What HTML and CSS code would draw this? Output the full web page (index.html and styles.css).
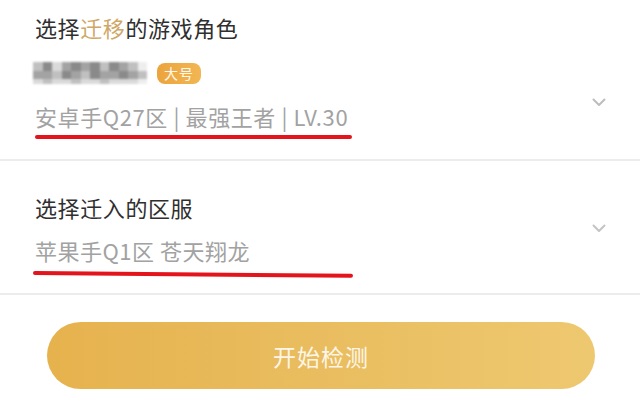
FILE: index.html
```html
<!DOCTYPE html>
<html lang="zh-CN">
<head>
<meta charset="utf-8">
<title>角色迁移</title>
<link rel="stylesheet" href="styles.css">
</head>
<body>
<main class="page">
  <section class="field field-role">
    <h2 class="field-title">选择<span class="accent">迁移</span>的游戏角色</h2>
    <div class="picker">
      <div class="picker-body">
        <div class="role-name">
          <div class="mosaic" aria-hidden="true">
            <i class="m3"></i><i class="m1"></i><i class="m4"></i><i class="m2"></i><i class="m1"></i><i class="m2"></i><i class="m1"></i><i class="m3"></i><i class="m1"></i><i class="m2"></i><i class="m3"></i><i class="m5"></i>
            <i class="m2"></i><i class="m2"></i><i class="m3"></i><i class="m1"></i><i class="m2"></i><i class="m3"></i><i class="m1"></i><i class="m2"></i><i class="m2"></i><i class="m1"></i><i class="m2"></i><i class="m3"></i>
            <i class="m4"></i><i class="m3"></i><i class="m4"></i><i class="m4"></i><i class="m3"></i><i class="m4"></i><i class="m4"></i><i class="m3"></i><i class="m4"></i><i class="m4"></i><i class="m4"></i><i class="m5"></i>
          </div>
          <span class="badge">大号</span>
        </div>
        <p class="value">安卓手Q27区 | 最强王者 | LV.30</p>
        <div class="mark mark-a"></div>
      </div>
      <svg class="chevron chevron-a" width="14" height="9" viewBox="0 0 14 9"><path d="M1.5 1.5 L7 7 L12.5 1.5" fill="none" stroke="#bdbdbd" stroke-width="2" stroke-linecap="round" stroke-linejoin="round"/></svg>
    </div>
  </section>

  <section class="field field-server">
    <div class="picker">
      <div class="picker-body">
        <h2 class="field-title">选择迁入的区服</h2>
        <p class="value value-server">苹果手Q1区 苍天翔龙</p>
        <div class="mark mark-b"></div>
      </div>
      <svg class="chevron chevron-b" width="14" height="9" viewBox="0 0 14 9"><path d="M1.5 1.5 L7 7 L12.5 1.5" fill="none" stroke="#c4c4c4" stroke-width="2" stroke-linecap="round" stroke-linejoin="round"/></svg>
    </div>
  </section>

  <div class="actions">
    <button class="start" type="button">开始检测</button>
  </div>
</main>
</body>
</html>
```

FILE: styles.css
```css
* {
  box-sizing: border-box;
}

html, body {
  margin: 0;
  padding: 0;
  background: #ffffff;
}

body {
  font-family: "Noto Sans CJK SC", "Noto Sans", sans-serif;
  color: #333333;
  width: 640px;
  height: 417px;
  overflow: hidden;
}

.field {
  padding-left: 35px;
  padding-right: 34px;
  border-bottom: 2px solid #ececec;
}

.field-role {
  padding-top: 12px;
  padding-bottom: 20px;
}

.field-server {
  padding-top: 31px;
  padding-bottom: 18px;
}

.field-title {
  margin: 0;
  font-size: 22px;
  font-weight: 400;
  line-height: 30px;
  color: #2f2f2f;
  letter-spacing: 0.6px;
}

.accent {
  color: #cfa766;
}

.picker {
  display: flex;
  align-items: center;
  justify-content: space-between;
}

.picker-body {
  display: flex;
  flex-direction: column;
  align-items: flex-start;
}

.role-name {
  display: flex;
  align-items: center;
  gap: 10px;
  margin-top: 20px;
  height: 22px;
}

/* pixelated nickname */
.mosaic {
  display: grid;
  grid-template-columns: repeat(12, 9.5px);
  grid-template-rows: 9px 8px 5px;
  width: 114px;
  margin-left: -2px;
  filter: blur(0.8px);
}

.mosaic i {
  display: block;
}

.m1 { background: #8a8a8a; }
.m2 { background: #a3a3a3; }
.m3 { background: #c0c0c0; }
.m4 { background: #dadada; }
.m5 { background: #eeeeee; }

.badge {
  display: inline-flex;
  align-items: center;
  justify-content: center;
  width: 44px;
  height: 21px;
  border-radius: 8px;
  background: linear-gradient(90deg, #eca43c, #f1b653);
  color: #fff8ec;
  font-size: 14px;
  line-height: 1;
  letter-spacing: 1px;
}

.value {
  margin: 18px 0 0;
  font-size: 22px;
  line-height: 28px;
  color: #a2a2a2;
  white-space: nowrap;
  letter-spacing: 0.6px;
}

.value-server {
  margin-top: 14px;
  letter-spacing: 0.5px;
}

/* red hand-drawn underline */
.mark {
  height: 3px;
  border-radius: 2px;
  background: #e3141b;
}

.mark-a {
  width: 317px;
  height: 4px;
  margin-top: 5px;
}

.mark-b {
  width: 320px;
  height: 4px;
  margin-top: 7px;
  margin-left: -2px;
  transform: rotate(0.5deg);
  transform-origin: left center;
}

.chevron {
  flex: none;
}

.chevron-a {
  margin-top: 24px;
}

.chevron-b {
  margin-top: -10px;
}

.actions {
  padding: 27px 45px 0 47px;
}

.start {
  display: block;
  width: 100%;
  height: 67px;
  border: 0;
  border-radius: 34px;
  background: linear-gradient(90deg, #e6b24e 0%, #e9bd5f 50%, #eec870 100%);
  color: #fdf6e8;
  font-family: "Noto Sans CJK SC", "Noto Sans", sans-serif;
  font-size: 23px;
  letter-spacing: 1px;
  padding: 0;
  cursor: pointer;
}
```
